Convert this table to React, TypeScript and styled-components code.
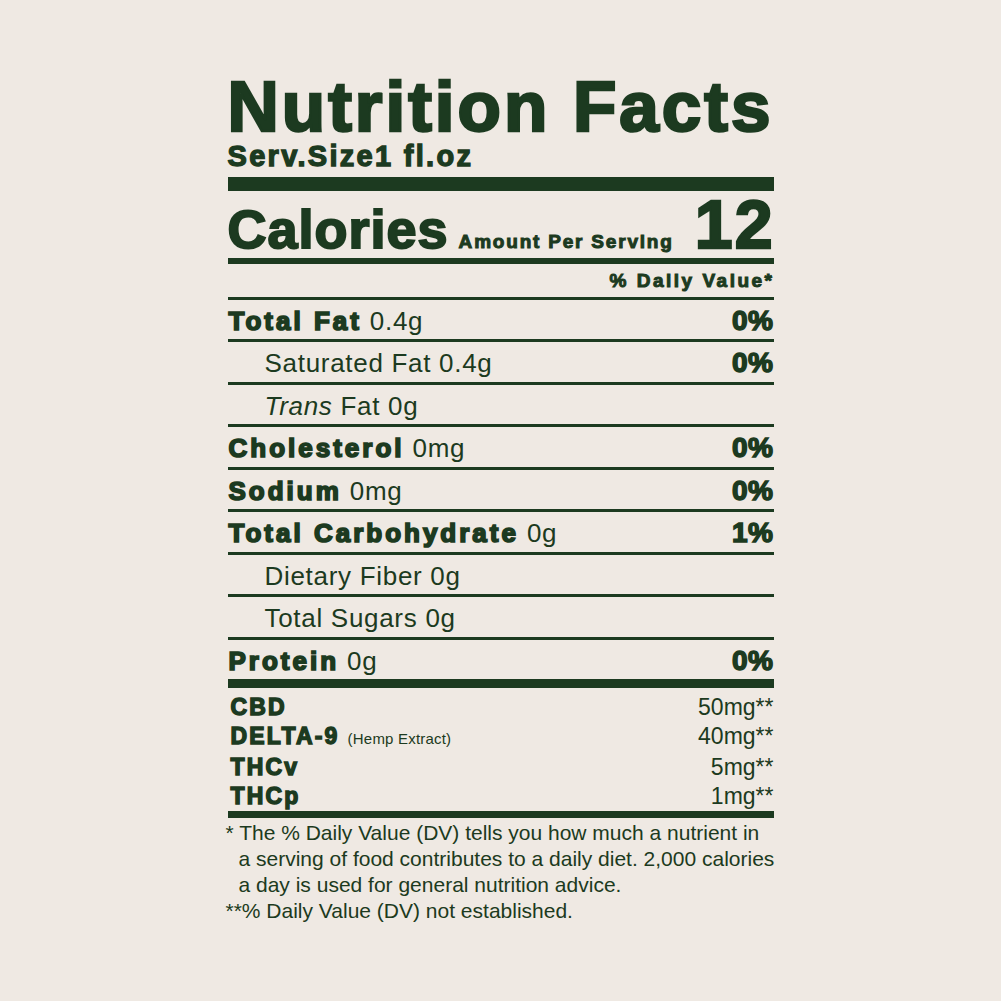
import React from "react";
import styled, { createGlobalStyle } from "styled-components";

const ink = "#1c3a20";

const GlobalStyle = createGlobalStyle`
  html, body {
    margin: 0;
    padding: 0;
    background: #efe9e3;
  }
  body {
    font-family: "Liberation Sans", Arial, sans-serif;
    color: ${ink};
  }
`;

const Page = styled.main`
  min-height: 100vh;
  display: flex;
  justify-content: center;
  padding-top: 71px;
  box-sizing: border-box;
`;

const Label = styled.section`
  width: 546px;
  display: flex;
  flex-direction: column;
`;

const Title = styled.h1`
  margin: 0;
  font-size: 71px;
  line-height: 71px;
  font-weight: 700;
  letter-spacing: 3px;
  -webkit-text-stroke: 2.6px ${ink};
  white-space: nowrap;
`;

const ServSize = styled.div`
  font-size: 29px;
  line-height: 29px;
  font-weight: 700;
  letter-spacing: 2.3px;
  -webkit-text-stroke: 1.3px ${ink};
  white-space: nowrap;
`;

const Bar = styled.div<{ $h: number; $mt?: number }>`
  height: ${(p) => p.$h}px;
  margin-top: ${(p) => p.$mt ?? 0}px;
  background: ${ink};
  flex-shrink: 0;
`;

const CaloriesRow = styled.div`
  display: flex;
  align-items: baseline;
  height: 67px;
`;

const CaloriesWord = styled.span`
  font-size: 54px;
  line-height: 54px;
  font-weight: 700;
  letter-spacing: 1px;
  -webkit-text-stroke: 2px ${ink};
`;

const PerServing = styled.span`
  font-size: 19px;
  font-weight: 700;
  letter-spacing: 1.8px;
  -webkit-text-stroke: 1px ${ink};
  margin-left: 10px;
  white-space: nowrap;
`;

const CaloriesValue = styled.span`
  margin-left: auto;
  font-size: 68px;
  line-height: 67px;
  font-weight: 700;
  letter-spacing: 2px;
  -webkit-text-stroke: 2.4px ${ink};
  margin-right: -1px;
`;

const DailyHeader = styled.div`
  text-align: right;
  font-size: 19px;
  line-height: 19px;
  font-weight: 700;
  letter-spacing: 2.5px;
  -webkit-text-stroke: 1px ${ink};
  padding-top: 7px;
  margin-bottom: 7px;
  margin-right: -1px;
`;

const NutrientRow = styled.div<{ $indent?: boolean }>`
  box-sizing: border-box;
  height: 42.5px;
  border-top: 3px solid ${ink};
  padding-top: 3px;
  padding-left: ${(p) => (p.$indent ? 37 : 1)}px;
  display: flex;
  justify-content: space-between;
  align-items: baseline;
  font-size: 26px;
  line-height: 36px;
`;

const Name = styled.span`
  font-size: 26px;
  font-weight: 700;
  letter-spacing: 3px;
  -webkit-text-stroke: 1.7px ${ink};
  white-space: nowrap;
`;

const Amount = styled.span`
  font-size: 26px;
  font-weight: 400;
  letter-spacing: 0.7px;
  white-space: nowrap;
`;

const Italic = styled.i`
  font-style: italic;
`;

const Percent = styled.span`
  font-size: 28px;
  font-weight: 700;
  letter-spacing: 0.5px;
  -webkit-text-stroke: 1.5px ${ink};
`;

const Extracts = styled.div`
  padding-top: 5px;
`;

const ExtractRow = styled.div`
  display: flex;
  justify-content: space-between;
  align-items: baseline;
  font-size: 23px;
  line-height: 28.7px;
  padding-left: 3px;
`;

const ExtractName = styled.span`
  font-size: 23px;
  font-weight: 700;
  letter-spacing: 2.2px;
  -webkit-text-stroke: 1.4px ${ink};
`;

const ExtractNote = styled.span`
  font-size: 15px;
  font-weight: 400;
  letter-spacing: 0.2px;
  margin-left: 8px;
`;

const ExtractValue = styled.span`
  font-size: 23px;
  font-weight: 400;
`;

const Footnote = styled.div`
  margin-top: 2px;
  font-size: 21px;
  line-height: 26px;
  padding-left: 11px;
`;

const NoteLine = styled.div<{ $hang?: boolean }>`
  white-space: nowrap;
  text-indent: ${(p) => (p.$hang ? -13 : 0)}px;
`;

type Nutrient = {
  name: string;
  amount: string;
  dv?: string;
  indent?: boolean;
  bold?: boolean;
  italic?: string;
};

const nutrients: Nutrient[] = [
  { name: "Total Fat", amount: "0.4g", dv: "0%", bold: true },
  { name: "Saturated Fat", amount: "0.4g", dv: "0%", indent: true },
  { name: "Fat", italic: "Trans", amount: "0g", indent: true },
  { name: "Cholesterol", amount: "0mg", dv: "0%", bold: true },
  { name: "Sodium", amount: "0mg", dv: "0%", bold: true },
  { name: "Total Carbohydrate", amount: "0g", dv: "1%", bold: true },
  { name: "Dietary Fiber", amount: "0g", indent: true },
  { name: "Total Sugars", amount: "0g", indent: true },
  { name: "Protein", amount: "0g", dv: "0%", bold: true },
];

const extracts = [
  { name: "CBD", value: "50mg**" },
  { name: "DELTA-9", note: "(Hemp Extract)", value: "40mg**" },
  { name: "THCv", value: "5mg**" },
  { name: "THCp", value: "1mg**" },
];

export default function App() {
  return (
    <>
      <GlobalStyle />
      <Page>
        <Label>
          <Title>Nutrition Facts</Title>
          <ServSize>Serv.Size1 fl.oz</ServSize>
          <Bar $h={14} $mt={5.5} />
          <CaloriesRow>
            <CaloriesWord>Calories</CaloriesWord>
            <PerServing>Amount Per Serving</PerServing>
            <CaloriesValue>12</CaloriesValue>
          </CaloriesRow>
          <Bar $h={6} />
          <DailyHeader>% Daily Value*</DailyHeader>
          {nutrients.map((n) => (
            <NutrientRow key={n.name + n.amount} $indent={n.indent}>
              <span>
                {n.bold ? (
                  <Name>{n.name}</Name>
                ) : (
                  <Amount>
                    {n.italic && <Italic>{n.italic} </Italic>}
                    {n.name}
                  </Amount>
                )}
                <Amount> {n.amount}</Amount>
              </span>
              {n.dv && <Percent>{n.dv}</Percent>}
            </NutrientRow>
          ))}
          <Bar $h={9} />
          <Extracts>
            {extracts.map((e) => (
              <ExtractRow key={e.name}>
                <span>
                  <ExtractName>{e.name}</ExtractName>
                  {e.note && <ExtractNote>{e.note}</ExtractNote>}
                </span>
                <ExtractValue>{e.value}</ExtractValue>
              </ExtractRow>
            ))}
          </Extracts>
          <Bar $h={7} />
          <Footnote>
            <NoteLine $hang>* The % Daily Value (DV) tells you how much a nutrient in</NoteLine>
            <NoteLine>a serving of food contributes to a daily diet. 2,000 calories</NoteLine>
            <NoteLine>a day is used for general nutrition advice.</NoteLine>
            <NoteLine $hang>**% Daily Value (DV) not established.</NoteLine>
          </Footnote>
        </Label>
      </Page>
    </>
  );
}
